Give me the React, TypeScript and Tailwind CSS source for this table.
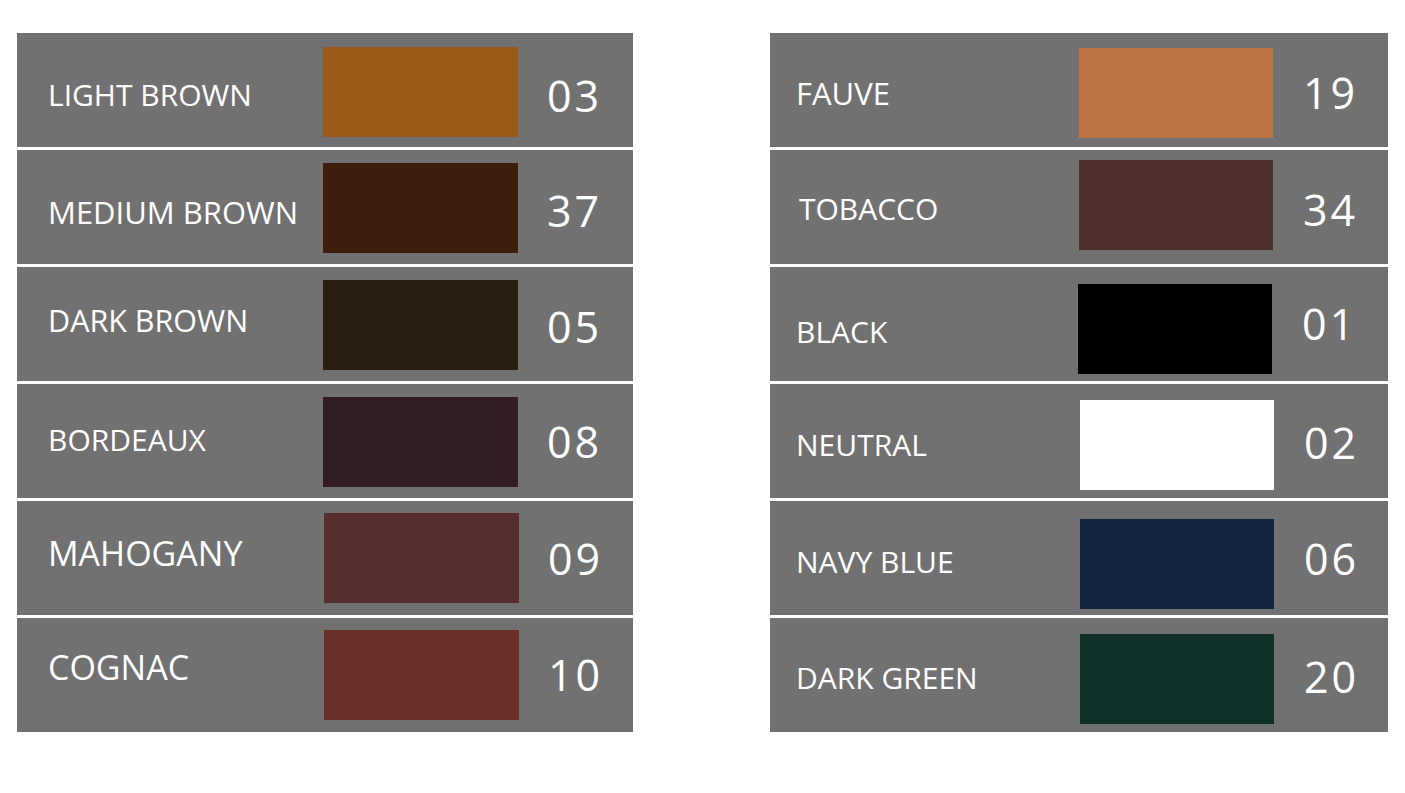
type Shade = {
  name: string;
  code: string;
  color: string;
  labelClass: string;
  swatchClass: string;
  codeClass: string;
};

const leftShades: Shade[] = [
  { name: 'LIGHT BROWN', code: '03', color: 'bg-[#9c5a19]', labelClass: 'text-[30px] translate-y-[5px]', swatchClass: 'mt-[14px]', codeClass: 'translate-y-[5px]' },
  { name: 'MEDIUM BROWN', code: '37', color: 'bg-[#3f1d0c]', labelClass: 'text-[31px] translate-y-[5px]', swatchClass: 'mt-[13px]', codeClass: 'translate-y-[3px]' },
  { name: 'DARK BROWN', code: '05', color: 'bg-[#2a1f0e]', labelClass: 'text-[30.5px] -translate-y-[4px]', swatchClass: 'mt-[13px]', codeClass: 'translate-y-[2px]' },
  { name: 'BORDEAUX', code: '08', color: 'bg-[#321d22]', labelClass: 'text-[30px] -translate-y-[1px]', swatchClass: 'mt-[13px]', codeClass: 'translate-y-0' },
  { name: 'MAHOGANY', code: '09', color: 'bg-[#552e2d]', labelClass: 'text-[34px] -translate-y-[5px]', swatchClass: 'mt-[12px] ml-[1px]', codeClass: 'translate-y-0' },
  { name: 'COGNAC', code: '10', color: 'bg-[#6b2f2a]', labelClass: 'text-[34px] -translate-y-[8px]', swatchClass: 'mt-[12px] ml-[1px]', codeClass: '-translate-y-[1px]' },
];

const rightShades: Shade[] = [
  { name: 'FAUVE', code: '19', color: 'bg-[#be7543]', labelClass: 'text-[31px] translate-y-[3px]', swatchClass: 'mt-[15px]', codeClass: 'translate-y-[2px]' },
  { name: 'TOBACCO', code: '34', color: 'bg-[#4d2f2c]', labelClass: 'text-[30px] translate-y-[2px] ml-[3px]', swatchClass: 'mt-[10px]', codeClass: 'translate-y-[2px]' },
  { name: 'BLACK', code: '01', color: 'bg-[#000000]', labelClass: 'text-[30px] translate-y-[8px]', swatchClass: 'mt-[17px] -ml-[1px]', codeClass: '-translate-y-[1px]' },
  { name: 'NEUTRAL', code: '02', color: 'bg-[#ffffff]', labelClass: 'text-[30px] translate-y-[4px]', swatchClass: 'mt-[16px] ml-[1px]', codeClass: 'translate-y-[1px]' },
  { name: 'NAVY BLUE', code: '06', color: 'bg-[#13243f]', labelClass: 'text-[30px] translate-y-[4px]', swatchClass: 'mt-[18px] ml-[1px]', codeClass: 'translate-y-0' },
  { name: 'DARK GREEN', code: '20', color: 'bg-[#10302a]', labelClass: 'text-[30px] translate-y-[3px]', swatchClass: 'mt-[16px] ml-[1px]', codeClass: 'translate-y-[1px]' },
];

function ShadeTable({ shades, side }: { shades: Shade[]; side: 'left' | 'right' }) {
  const isLeft = side === 'left';
  return (
    <div className={`flex flex-col gap-[3px] ${isLeft ? 'w-[616px]' : 'w-[618px]'}`}>
      {shades.map((s) => (
        <div key={s.code} className="flex h-[114px] items-start bg-[#717171]">
          {/* Label */}
          <div className={`flex h-full items-center shrink-0 ${isLeft ? 'w-[306px] pl-[31px]' : 'w-[309px] pl-[26px]'}`}>
            <span className={`leading-none text-white whitespace-nowrap ${s.labelClass}`}>{s.name}</span>
          </div>

          {/* Swatch */}
          <div className={`h-[90px] shrink-0 ${isLeft ? 'w-[195px]' : 'w-[194px]'} ${s.color} ${s.swatchClass}`} />

          {/* Code */}
          <div className={`flex h-full items-center ${isLeft ? 'pl-[29px]' : 'pl-[30px]'}`}>
            <span className={`text-[43px] leading-none tracking-[3px] text-white ${s.codeClass}`}>{s.code}</span>
          </div>
        </div>
      ))}
    </div>
  );
}

export default function App() {
  return (
    <div className="h-[793px] w-[1405px] bg-white font-['Open_Sans',sans-serif]">
      <div className="flex gap-[137px] pl-[17px] pt-[33px]">
        <ShadeTable shades={leftShades} side="left" />
        <ShadeTable shades={rightShades} side="right" />
      </div>
    </div>
  );
}
